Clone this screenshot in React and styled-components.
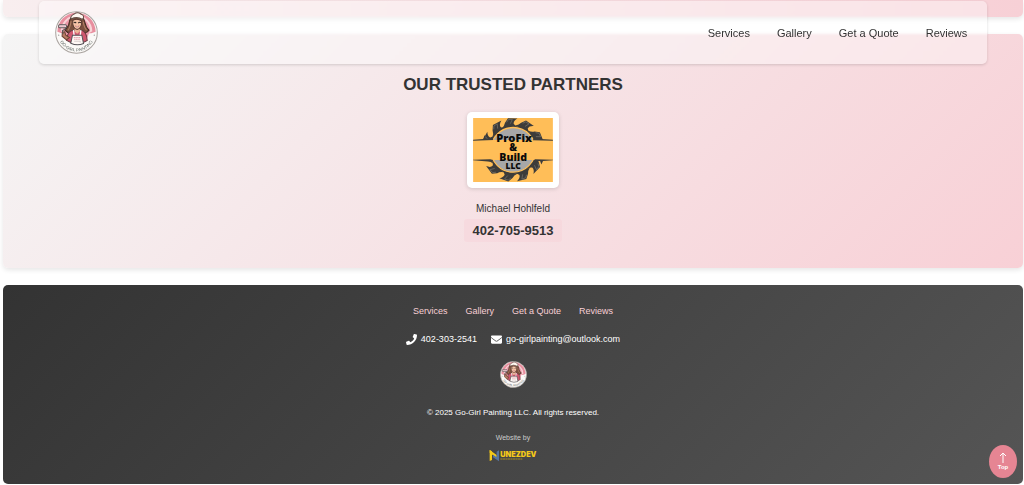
import React from 'react';
import styled, { createGlobalStyle } from 'styled-components';
import { FaPhone, FaEnvelope } from 'react-icons/fa';

const GlobalStyle = createGlobalStyle`
    * {
        box-sizing: border-box;
    }
    body {
        margin: 0;
        background: white;
        color: #333;
        font-family: "Liberation Sans", Arial, sans-serif;
    }
    a {
        color: inherit;
        text-decoration: none;
    }
`

const Page = styled.div`
    display: flex;
    flex-direction: column;
    gap: 17px;
    padding: 0 1px 1px 3px;
`

const HeaderWrap = styled.div`
    position: fixed;
    top: 1px;
    left: 3px;
    right: 1px;
    z-index: 10;
    display: flex;
    justify-content: center;
`

const Header = styled.header`
    display: flex;
    align-items: center;
    justify-content: space-between;
    width: 93%;
    padding: 10px 20px 10px 16px;
    border-radius: 5px;
    background: rgba(255, 255, 255, 0.4);
    box-shadow: 0 1px 3px rgba(0, 0, 0, 0.15);
    backdrop-filter: blur(1px);
`

const Nav = styled.nav`
    display: flex;
    gap: 27px;
    font-size: 11px;
    line-height: 16px;
`

const PreviousSection = styled.section`
    height: 17px;
    border-radius: 0 0 5px 5px;
    background: linear-gradient(90deg, #f8eeef, #f7d0d6);
    box-shadow: 0 2px 5px rgba(0, 0, 0, 0.1);
`

const PartnersSection = styled.section`
    display: flex;
    flex-direction: column;
    align-items: center;
    padding: 41px 20px 26px;
    border-radius: 5px;
    background: linear-gradient(135deg, #f5f5f5, #f8d0d6);
    box-shadow: 0 2px 5px rgba(0, 0, 0, 0.1);
`

const Title = styled.h2`
    margin: 0 0 17px;
    font-size: 17px;
    line-height: 20px;
    text-transform: uppercase;
`

const PartnerCard = styled.div`
    display: flex;
    padding: 6px;
    border-radius: 5px;
    background: white;
    box-shadow: 0 1px 4px rgba(0, 0, 0, 0.15);
`

const PartnerName = styled.p`
    margin: 13px 0 2px;
    font-size: 10px;
    line-height: 16px;
`

const PartnerPhone = styled.a`
    padding: 0 9px;
    border-radius: 3px;
    background: rgba(248, 208, 214, 0.4);
    font-size: 13px;
    font-weight: bold;
    line-height: 23px;
`

const Footer = styled.footer`
    display: flex;
    flex-direction: column;
    align-items: center;
    padding: 20px 20px 22px;
    border-radius: 5px;
    background: linear-gradient(135deg, #333, #555);
    color: white;
`

const FooterNav = styled.nav`
    display: flex;
    gap: 18px;
    margin-bottom: 16px;
    color: #f8d0d6;
    font-size: 9px;
    line-height: 12px;
`

const Contact = styled.div`
    display: flex;
    gap: 14px;
    margin-bottom: 16px;
    font-size: 9px;
    line-height: 12px;
`

const ContactLink = styled.a`
    display: flex;
    align-items: center;
    gap: 4px;
    svg {
        width: 11px;
        height: 11px;
    }
`

const Copyright = styled.p`
    margin: 20px 0 15px;
    font-size: 8px;
    line-height: 10px;
`

const Credit = styled.a`
    display: flex;
    flex-direction: column;
    align-items: center;
    gap: 6px;
    color: #ccc;
    font-size: 7px;
    line-height: 10px;
`

const TopButton = styled.button`
    position: fixed;
    right: 7px;
    bottom: 7px;
    display: flex;
    flex-direction: column;
    align-items: center;
    justify-content: center;
    width: 28px;
    height: 33px;
    padding: 0;
    border: none;
    border-radius: 50%;
    background: #e68593;
    color: white;
    font-family: inherit;
    font-size: 6px;
    font-weight: bold;
    line-height: 7px;
`

const links = [
    { label: 'Services', href: '#services' },
    { label: 'Gallery', href: '#gallery' },
    { label: 'Get a Quote', href: '#quote' },
    { label: 'Reviews', href: '#reviews' },
];

const Logo = ({ size, id }) => (
    <svg width={size} height={size} viewBox="0 0 128 128" role="img" aria-label="Go-Girl Painting">
        <circle cx="64" cy="64" r="62" fill="#fbf9f7" stroke="#a9a39f" strokeWidth="3" />
        <path d="M7 62A57 57 0 0 1 121 62L108 66H20Z" fill="#e88f9f" />
        <path d="M17 60A47 47 0 0 1 111 60L98 68H30Z" fill="#f8d5d8" />
        <path d="M24 58A40 40 0 0 1 104 58L96 80H32Z" fill="#ec9cab" />
        {/* hair */}
        <path d="M65 12C44 14 43 29 41 40C39 49 33 50 30 57C37 66 46 66 52 62H80C86 67 96 65 101 57C94 51 91 43 89 34C86 20 79 13 65 12Z" fill="#7b503e" stroke="#42291f" strokeWidth="3" />
        <path d="M48 30C46 43 44 51 38 58M84 32C86 44 88 51 94 57" stroke="#b28167" strokeWidth="3" fill="none" />
        {/* shoulders and sleeves */}
        <path d="M51 58C39 59 36 74 34 87L47 94L53 77H79L84 94L96 88C95 72 91 60 79 57Z" fill="#d1586f" stroke="#633b40" strokeWidth="3" />
        <path d="M58 51H74V61L66 68L58 61Z" fill="#edb598" />
        {/* face */}
        <path d="M53 28Q66 20 79 29C81 43 75 54 66 55C57 54 51 43 53 28Z" fill="#f6c3a6" stroke="#5a3b31" strokeWidth="3" />
        <path d="M56 35Q60 32 63 36M69 36Q73 32 77 35" stroke="#332824" strokeWidth="3" fill="none" />
        <path d="M60 44Q66 49 72 44Q66 54 60 44Z" fill="#fff" stroke="#9c3844" strokeWidth="1" />
        {/* cap */}
        <path d="M48 24C44 15 51 12 57 9C64 3 74 5 78 10C86 12 87 19 82 25Q65 15 48 24Z" fill="#fff8f1" stroke="#624e45" strokeWidth="3" />
        {/* apron */}
        <path d="M55 57L57 73M77 57L75 73" stroke="#fff" strokeWidth="4" />
        <path d="M52 72H80L85 97Q66 105 47 96Z" fill="#fff8f5" stroke="#575459" strokeWidth="3" />
        <path d="M56 79H76M57 84H75" stroke="#d87b8b" strokeWidth="2" strokeDasharray="4 1" />
        <path d="M57 90H75V94" stroke="#c6bcbd" strokeWidth="2" fill="none" />
        {/* arm with the roller */}
        <path d="M34 86L21 75L22 63L29 62L32 72L43 79Z" fill="#b97b63" stroke="#694234" strokeWidth="3" />
        <path d="M24 69L22 58L31 54L30 47" stroke="#555" strokeWidth="3" fill="none" />
        <rect x="11" y="41" width="23" height="9" rx="3" fill="#fff" stroke="#575154" strokeWidth="3" />
        <path d="M14 45H31" stroke="#cc6d80" strokeWidth="2" />
        <circle cx="11" cy="72" r="2" fill="#999" />
        <circle cx="117" cy="72" r="2" fill="#999" />
        <path id={id} d="M12 85A56 56 0 0 0 116 85" fill="none" />
        <text fill="#5f6863" fontSize="13" fontFamily="Liberation Sans, sans-serif">
            <textPath href={`#${id}`} startOffset="50%" textAnchor="middle">GO-GIRL PAINTING</textPath>
        </text>
    </svg>
);

const teeth = [...Array(11).keys()];

const Blade = () => (
    <g transform="translate(122 97)">
        {teeth.map(i => (
            <g key={i} transform={`rotate(${i * 33 - 4})`}>
                <path d="M-30 -68Q-21 -75 -19 -84L-9 -97L20 -94Q7 -88 7 -79Q9 -74 19 -70Z" fill="#3d3c3a" />
                <path d="M-14 -85L-8 -93L4 -93L-3 -80" fill="none" stroke="#77736b" strokeWidth="2" />
            </g>
        ))}
        <circle r="73" fill="#3d3c3a" />
        <circle r="68" fill="#a7a7a8" stroke="#ffbe58" strokeWidth="4" />
    </g>
);

const ProFixLogo = () => (
    <svg width="80" height="64" viewBox="0 0 243 195" role="img" aria-label="ProFix & Build LLC">
        <rect width="243" height="195" fill="#ffbe58" />
        <Blade />
        <rect y="67" width="243" height="61" fill="#ffbe58" />
        <path d="M0 66L31 64L35 52L39 64L57 62L62 67L0 69ZM243 66L196 63L184 63L182 68L243 69Z" fill="#3d3c3a" />
        <path d="M0 127L52 126L61 128L54 133L0 129ZM243 127L188 126L184 132L204 131L208 142L213 131L243 129Z" fill="#3d3c3a" />
        <g fill="#0b0b0b" textAnchor="middle" fontFamily="Noto Sans, sans-serif" fontWeight="900">
            <text x="125" y="74" fontSize="34">ProFix</text>
            <text x="122" y="102" fontSize="30">&amp;</text>
            <text x="122" y="130" fontSize="32">Build</text>
            <text x="122" y="155" fontSize="26">LLC</text>
        </g>
    </svg>
);

const NunezDevLogo = () => (
    <svg width="48" height="13" viewBox="0 0 144 39" role="img" aria-label="NunezDev">
        <path d="M2 3L9 7V33L2 36Z" fill="#f5c919" />
        <path d="M2 3L23 18V27L2 11Z" fill="#f5c919" />
        <path d="M23 8L30 4V37L12 25V17L23 25Z" fill="#5674a0" />
        <text x="34" y="24" fill="#f5c919" fontFamily="Inter, sans-serif" fontWeight="900" fontSize="22">UNEZDEV</text>
        <path d="M34 30H101" stroke="#a58c27" strokeWidth="3" strokeDasharray="5 1 8 1" />
    </svg>
);

const NavLinks = () => links.map(link => (
    <a key={link.label} href={link.href}>{link.label}</a>
));

const App = () => {

    const scrollToTop = () => {
        window.scrollTo({ top: 0, behavior: 'smooth' });
    };

    return (
        <>
            <GlobalStyle />
            <HeaderWrap>
                <Header>
                    <Logo size={43} id="header-logo-arc" />
                    <Nav><NavLinks /></Nav>
                </Header>
            </HeaderWrap>
            <Page>
                <PreviousSection />
                <PartnersSection>
                    <Title>Our Trusted Partners</Title>
                    <PartnerCard>
                        <ProFixLogo />
                    </PartnerCard>
                    <PartnerName>Michael Hohlfeld</PartnerName>
                    <PartnerPhone href="tel:4027059513">402-705-9513</PartnerPhone>
                </PartnersSection>
                <Footer>
                    <FooterNav><NavLinks /></FooterNav>
                    <Contact>
                        <ContactLink href="tel:4023032541"><FaPhone />402-303-2541</ContactLink>
                        <ContactLink href="mailto:go-girlpainting@outlook.com"><FaEnvelope />go-girlpainting@outlook.com</ContactLink>
                    </Contact>
                    <Logo size={27} id="footer-logo-arc" />
                    <Copyright>© 2025 Go-Girl Painting LLC. All rights reserved.</Copyright>
                    <Credit href="#nunezdev">
                        Website by
                        <NunezDevLogo />
                    </Credit>
                </Footer>
            </Page>
            <TopButton onClick={scrollToTop}>
                <svg width="8" height="12" viewBox="0 0 8 12" fill="none" stroke="currentColor" strokeWidth="1" aria-hidden="true">
                    <path d="M4 11V1M1 4L4 1L7 4" />
                </svg>
                Top
            </TopButton>
        </>
    );
};

export default App;
